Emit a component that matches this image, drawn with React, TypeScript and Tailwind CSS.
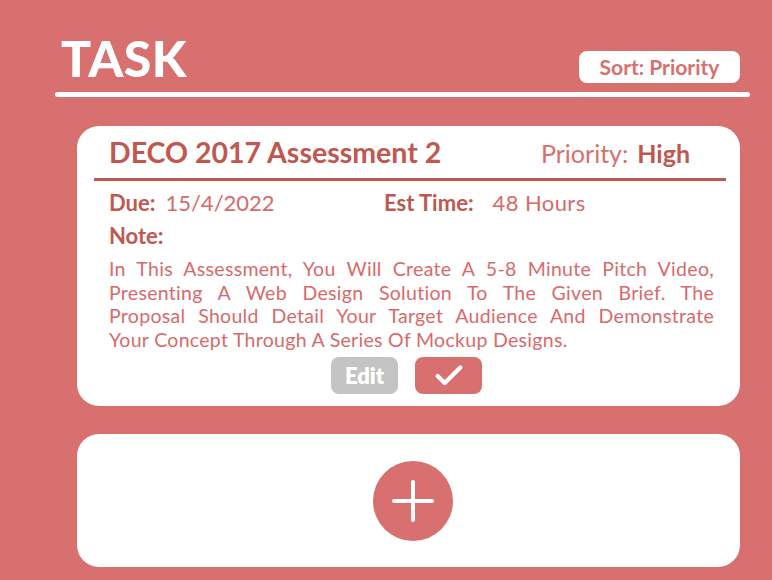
import { Check } from "lucide-react";

const font = { fontFamily: "Lato, 'Noto Sans', sans-serif" };

const noteLines = [
    "In This Assessment, You Will Create A 5-8 Minute Pitch Video,",
    "Presenting A Web Design Solution To The Given Brief. The",
    "Proposal Should Detail Your Target Audience And Demonstrate",
];

export default function App() {
    return (
        <div className="w-[772px] h-[580px] overflow-hidden bg-[#d7706e]" style={font}>
            <header className="pl-[55px] pr-[22px] pt-[28px]">
                <div className="flex items-end justify-between pl-[6px] pr-[10px]">
                    <h1 className="text-[50px] leading-[60px] font-black text-white tracking-[0.5px]">TASK</h1>
                    <button className="mb-[5px] w-[161px] h-[32px] rounded-lg bg-white text-[#d7706e] text-[21px] font-bold">
                        Sort: Priority
                    </button>
                </div>
                <div className="mt-[4px] h-[5px] rounded-full bg-white" />
            </header>

            <main className="mt-[29px] ml-[77px] mr-[32px] flex flex-col gap-[28px]">
                <section className="bg-white rounded-[22px] h-[280px] pt-[9px]">
                    <div className="flex items-end justify-between px-[32px] pr-[50px]">
                        <h2 className="text-[28.5px] leading-[34px] font-bold text-[#c0584f]">DECO 2017 Assessment 2</h2>
                        <div className="text-[25px] leading-[32px] text-[#d7706e]">
                            Priority:<span className="ml-[9px] font-bold text-[#c0584f]">High</span>
                        </div>
                    </div>
                    <div className="mt-[9px] mx-[17px] mr-[14px] h-[3px] bg-[#c0584f]" />
                    <div className="px-[32px] pt-[8px] text-[22px] leading-[28px] flex">
                        <div className="w-[275px]">
                            <span className="font-bold text-[#c0584f]">Due:</span>
                            <span className="ml-[10px] text-[#d86a6b]">15/4/2022</span>
                        </div>
                        <div>
                            <span className="font-bold text-[#c0584f]">Est Time:</span>
                            <span className="ml-[19px] text-[#d86a6b] tracking-[0.4px]">48 Hours</span>
                        </div>
                    </div>
                    <div className="px-[32px] pt-[5px] text-[22px] leading-[28px] font-bold text-[#c0584f]">Note:</div>
                    <div className="mt-[7px] pl-[32px] pr-[26px] text-[19.5px] leading-[23.5px] text-[#d86a6b] tracking-[0.3px]">
                        {noteLines.map((line) => (
                            <div key={line} className="text-justify [text-align-last:justify]">{line}</div>
                        ))}
                        <div>Your Concept Through A Series Of Mockup Designs.</div>
                    </div>
                    <div className="mt-[6px] flex justify-center gap-[17px] pr-[4px]">
                        <button className="w-[67px] h-[37px] rounded-lg bg-[#c4c4c4] text-white text-[22px] font-extrabold">Edit</button>
                        <button className="w-[67px] h-[37px] rounded-lg bg-[#d7706e] flex items-center justify-center">
                            <Check className="w-[34px] h-[34px] text-white" strokeWidth={3} />
                        </button>
                    </div>
                </section>

                <section className="bg-white rounded-[22px] h-[133px] flex items-center justify-center pl-[9px]">
                    <button className="w-[80px] h-[80px] rounded-full bg-[#d7706e] flex items-center justify-center">
                        <svg width="42" height="42" viewBox="0 0 42 42">
                            <path d="M21 2v38M2 21h38" stroke="white" strokeWidth="4" strokeLinecap="round" />
                        </svg>
                    </button>
                </section>
            </main>
        </div>
    );
}
